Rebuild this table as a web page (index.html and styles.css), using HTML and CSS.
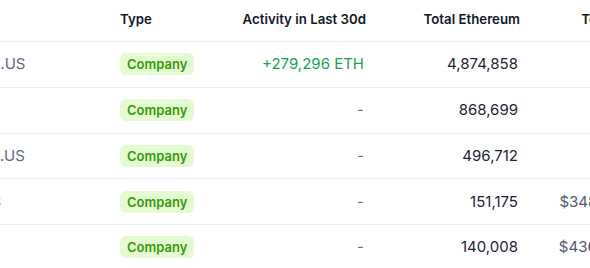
FILE: index.html
```html
<!DOCTYPE html>
<html lang="en">
<head>
<meta charset="utf-8">
<title>Ethereum Treasuries</title>
<link rel="stylesheet" href="styles.css">
</head>
<body>
<div class="viewport">
  <table class="holders">
    <colgroup>
      <col class="c-name">
      <col class="c-type">
      <col class="c-act">
      <col class="c-total">
      <col class="c-value">
    </colgroup>
    <thead>
      <tr>
        <th class="left">Entity</th>
        <th class="left">Type</th>
        <th class="right">Activity in Last 30d</th>
        <th class="right">Total Ethereum</th>
        <th class="right">Total in USD</th>
      </tr>
    </thead>
    <tbody>
      <tr>
        <td class="name"><div class="entity"><span class="rank">1</span><span class="logo"></span><span class="ticker">BMNR.US</span></div></td>
        <td><span class="badge">Company</span></td>
        <td class="right up">+279,296 ETH</td>
        <td class="right num">4,874,858</td>
        <td class="right usd">-</td>
      </tr>
      <tr>
        <td class="name"><div class="entity"><span class="rank">2</span><span class="logo"></span><span class="ticker">SRM</span></div></td>
        <td><span class="badge">Company</span></td>
        <td class="right dash">-</td>
        <td class="right num">868,699</td>
        <td class="right usd">-</td>
      </tr>
      <tr>
        <td class="name"><div class="entity"><span class="rank">3</span><span class="logo"></span><span class="ticker">GAME.US</span></div></td>
        <td><span class="badge">Company</span></td>
        <td class="right dash">-</td>
        <td class="right num">496,712</td>
        <td class="right usd">-</td>
      </tr>
      <tr>
        <td class="name"><div class="entity"><span class="rank">4</span><span class="logo"></span><span class="ticker">DMGS</span></div></td>
        <td><span class="badge">Company</span></td>
        <td class="right dash">-</td>
        <td class="right num">151,175</td>
        <td class="right usd">$348,470,215</td>
      </tr>
      <tr>
        <td class="name"><div class="entity"><span class="rank">5</span><span class="logo"></span><span class="ticker">GD</span></div></td>
        <td><span class="badge">Company</span></td>
        <td class="right dash">-</td>
        <td class="right num">140,008</td>
        <td class="right usd">$436,812,960</td>
      </tr>
    </tbody>
  </table>
</div>
</body>
</html>
```

FILE: styles.css
```css
html, body {
  margin: 0;
  padding: 0;
  background: #ffffff;
}

body {
  font-family: Inter, "Noto Sans", "Liberation Sans", sans-serif;
  font-size: 15px;
  color: #111827;
}

.viewport {
  width: 590px;
  height: 268px;
  overflow: hidden;
}

.holders {
  border-collapse: collapse;
  table-layout: fixed;
  width: 793px;
  margin-left: -120px;
}

.c-name { width: 224px; }
.c-type { width: 110px; }
.c-act { width: 166px; }
.c-total { width: 154px; }
.c-value { width: 139px; }

.holders th {
  font-weight: 600;
  font-size: 13.25px;
  line-height: 20px;
  color: #111827;
  padding: 9px 14px 12px 16px;
  border-bottom: 1px solid #eceef1;
  white-space: nowrap;
}

.holders td {
  height: 44.75px;
  padding: 0 16px;
  line-height: 20px;
  font-size: 15px;
  border-bottom: 1px solid #eceef1;
  white-space: nowrap;
  vertical-align: middle;
}

.holders tbody tr:last-child td {
  border-bottom: none;
}

.left { text-align: left; }
.right { text-align: right; }

.name {
  color: #5c6b85;
}

.entity {
  display: flex;
  align-items: center;
  gap: 8px;
}

.rank {
  width: 20px;
  flex: none;
  color: #64748b;
}

.logo {
  width: 24px;
  height: 24px;
  flex: none;
  border-radius: 50%;
  background: #e5e7eb;
}

.badge {
  display: inline-block;
  height: 22px;
  line-height: 22px;
  padding: 0 7px;
  border-radius: 6px;
  background: #e4fbd1;
  color: #36990c;
  font-size: 13px;
  font-weight: 600;
  vertical-align: middle;
}

.up { color: #17a34a; }
.dash { color: #64748b; }
.num { color: #1e2433; }
.usd { color: #4b5a72; }
```
